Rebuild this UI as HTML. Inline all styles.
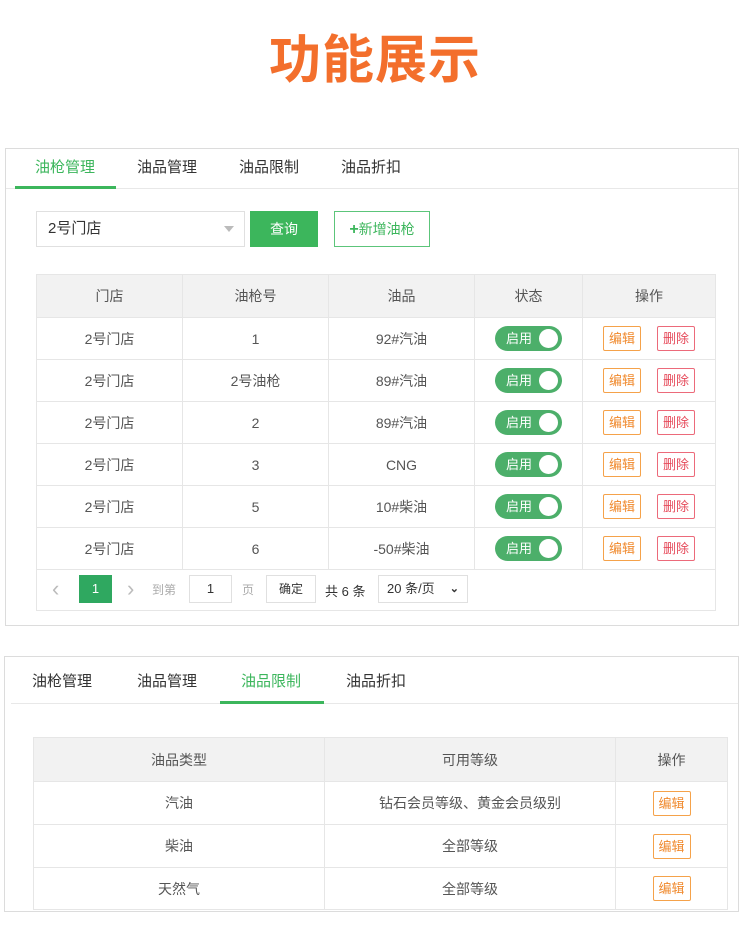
<!DOCTYPE html>
<html><head><meta charset="utf-8">
<style>
*{margin:0;padding:0;box-sizing:border-box}
body{width:750px;height:931px;background:#fff;position:relative;overflow:hidden;font-family:"Liberation Sans","Noto Sans CJK SC",sans-serif;color:#555}
.a{position:absolute}
.title{left:0;width:750px;top:28px;text-align:center;font-size:52px;font-weight:bold;color:#f36f2c;line-height:66px;letter-spacing:1px}
.panel{border:1px solid #dcdcdc;background:#fff}
.tab{font-size:15px;color:#333;line-height:20px}
.tab.on{color:#3cb65c}
.ul{height:3px;background:#3cb65c}
.hr{height:1px;background:#e8e8e8}
table{border-collapse:collapse;position:absolute;font-size:14px;color:#555;table-layout:fixed}
td,th{border:1px solid #e6e6e6;text-align:center;font-weight:normal;padding:0}
th{background:#f2f2f2;color:#555}
.sw{display:inline-block;width:67px;height:25px;border-radius:13px;background:#4caf6a;position:relative;vertical-align:middle;color:#fff;font-size:13px;line-height:25px;text-align:left;padding-left:11px}
.sw:after{content:"";position:absolute;right:4px;top:3px;width:19px;height:19px;border-radius:50%;background:#fff}
.bt{display:inline-block;width:38px;height:25px;border:1px solid #f5a24a;color:#f08a2e;font-size:13px;line-height:23px;text-align:center;border-radius:2px;vertical-align:middle}
.bt.d{border-color:#ec6a7a;color:#e64a5a;margin-left:16px}
</style></head><body>
<div class="a title">功能展示</div>

<div class="a panel" style="left:5px;top:148px;width:734px;height:478px"></div>
<div class="a tab on" style="left:35px;top:158px">油枪管理</div>
<div class="a tab" style="left:137px;top:158px">油品管理</div>
<div class="a tab" style="left:239px;top:158px">油品限制</div>
<div class="a tab" style="left:341px;top:158px">油品折扣</div>
<div class="a hr" style="left:6px;top:188px;width:732px"></div>
<div class="a ul" style="left:15px;top:186px;width:101px"></div>

<div class="a" style="left:36px;top:211px;width:209px;height:36px;border:1px solid #e0e0e0;font-size:15px;color:#333;line-height:34px;padding-left:11px">2号门店<span class="a" style="right:10px;top:14px;border-left:5px solid transparent;border-right:5px solid transparent;border-top:6px solid #bbb"></span></div>
<div class="a" style="left:250px;top:211px;width:68px;height:36px;background:#3cb65c;color:#fff;font-size:14px;line-height:36px;text-align:center">查询</div>
<div class="a" style="left:334px;top:211px;width:96px;height:36px;border:1px solid #5cc57a;color:#3cb65c;font-size:14px;line-height:34px;text-align:center"><b style="font-size:16px">+</b>新增油枪</div>

<table style="left:36px;top:274px;width:679px">
<colgroup><col style="width:146px"><col style="width:146px"><col style="width:146px"><col style="width:108px"><col style="width:133px"></colgroup>
<tr style="height:43px"><th>门店</th><th>油枪号</th><th>油品</th><th>状态</th><th>操作</th></tr>
<tr style="height:42px"><td>2号门店</td><td>1</td><td>92#汽油</td><td><span class="sw">启用</span></td><td><span class="bt">编辑</span><span class="bt d">删除</span></td></tr>
<tr style="height:42px"><td>2号门店</td><td>2号油枪</td><td>89#汽油</td><td><span class="sw">启用</span></td><td><span class="bt">编辑</span><span class="bt d">删除</span></td></tr>
<tr style="height:42px"><td>2号门店</td><td>2</td><td>89#汽油</td><td><span class="sw">启用</span></td><td><span class="bt">编辑</span><span class="bt d">删除</span></td></tr>
<tr style="height:42px"><td>2号门店</td><td>3</td><td>CNG</td><td><span class="sw">启用</span></td><td><span class="bt">编辑</span><span class="bt d">删除</span></td></tr>
<tr style="height:42px"><td>2号门店</td><td>5</td><td>10#柴油</td><td><span class="sw">启用</span></td><td><span class="bt">编辑</span><span class="bt d">删除</span></td></tr>
<tr style="height:42px"><td>2号门店</td><td>6</td><td>-50#柴油</td><td><span class="sw">启用</span></td><td><span class="bt">编辑</span><span class="bt d">删除</span></td></tr>
<tr style="height:41px"><td colspan="5" style="border-color:#e6e6e6"></td></tr>
</table>
<div class="a" style="left:52px;top:575px;font-size:22px;line-height:28px;color:#bbb">&#8249;</div>
<div class="a" style="left:79px;top:575px;width:33px;height:28px;background:#2fa860;color:#fff;font-size:13px;line-height:28px;text-align:center">1</div>
<div class="a" style="left:127px;top:575px;font-size:22px;line-height:28px;color:#bbb">&#8250;</div>
<div class="a" style="left:152px;top:581px;font-size:12px;color:#aaa">到第</div>
<div class="a" style="left:189px;top:575px;width:43px;height:28px;border:1px solid #e0e0e0;font-size:13px;color:#333;line-height:26px;text-align:center">1</div>
<div class="a" style="left:242px;top:581px;font-size:12px;color:#aaa">页</div>
<div class="a" style="left:266px;top:575px;width:50px;height:28px;border:1px solid #e0e0e0;font-size:12px;color:#333;line-height:26px;text-align:center">确定</div>
<div class="a" style="left:325px;top:581px;font-size:13px;color:#333">共 6 条</div>
<div class="a" style="left:378px;top:575px;width:90px;height:28px;border:1px solid #e0e0e0;font-size:13px;color:#333;line-height:26px;padding-left:8px">20 条/页<span class="a" style="right:8px;top:0;font-size:11px;font-weight:bold">&#8964;</span></div>

<div class="a panel" style="left:4px;top:656px;width:735px;height:256px"></div>
<div class="a tab" style="left:32px;top:672px">油枪管理</div>
<div class="a tab" style="left:137px;top:672px">油品管理</div>
<div class="a tab on" style="left:241px;top:672px">油品限制</div>
<div class="a tab" style="left:346px;top:672px">油品折扣</div>
<div class="a hr" style="left:11px;top:703px;width:727px"></div>
<div class="a ul" style="left:220px;top:701px;width:104px"></div>

<table style="left:33px;top:737px;width:694px">
<colgroup><col style="width:291px"><col style="width:291px"><col style="width:112px"></colgroup>
<tr style="height:44px"><th>油品类型</th><th>可用等级</th><th>操作</th></tr>
<tr style="height:43px"><td>汽油</td><td>钻石会员等级、黄金会员级别</td><td><span class="bt">编辑</span></td></tr>
<tr style="height:43px"><td>柴油</td><td>全部等级</td><td><span class="bt">编辑</span></td></tr>
<tr style="height:42px"><td>天然气</td><td>全部等级</td><td><span class="bt">编辑</span></td></tr>
</table>
</body></html>
